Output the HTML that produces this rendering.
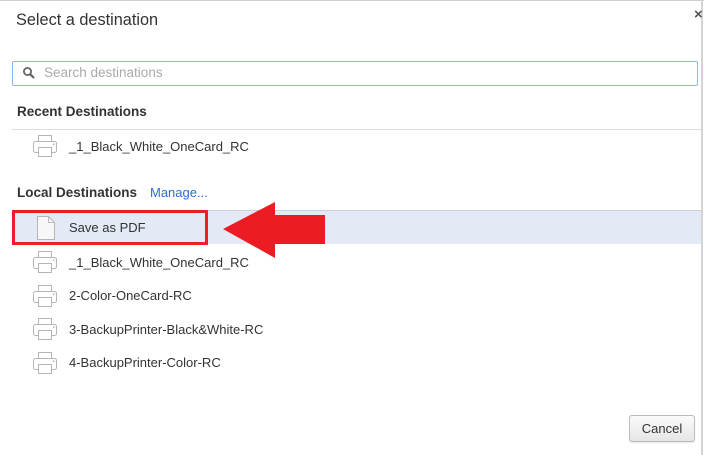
<!DOCTYPE html>
<html><head><meta charset="utf-8"><style>
body{margin:0;width:704px;height:455px;background:#fff;position:relative;overflow:hidden;font-family:"Liberation Sans",sans-serif;color:#333}
.a{position:absolute}
.t{font-size:13px;color:#333}
.h{font-size:13.5px;font-weight:bold;color:#333}
</style></head><body>
<div class="a" style="left:0;top:0;width:704px;height:1px;background:#cfcfcf"></div>
<div class="a" style="left:701px;top:0;width:2px;height:455px;background:#d4d4d4"></div>
<div class="a" style="left:16px;top:11px;font-size:16.3px;color:#333">Select a destination</div>
<div class="a" style="left:694px;top:6px;font-size:15px;font-weight:bold;color:#555">×</div>
<div class="a" style="left:12px;top:61px;width:686px;height:25px;border:1px solid #8fb3f0;border-radius:2px;box-sizing:border-box"></div>
<svg class="a" style="left:22px;top:66px" width="14" height="14" viewBox="0 0 14 14"><circle cx="5.5" cy="5.5" r="3.6" fill="none" stroke="#666" stroke-width="1.8"/><path d="M8.2 8.2L12 12" stroke="#666" stroke-width="2.2"/></svg>
<div class="a" style="left:44px;top:65px;font-size:13.5px;color:#aaa">Search destinations</div>
<div class="a h" style="left:17px;top:104px">Recent Destinations</div>
<div class="a" style="left:12px;top:129px;width:689px;height:1px;background:#ddd"></div>

<svg width="0" height="0" style="position:absolute"><defs><g id="pr"><rect x="5.5" y="0.5" width="13" height="7" fill="#fff" stroke="#b5b5b5"/><rect x="0.5" y="6.5" width="23" height="11" rx="2" fill="#fff" stroke="#b5b5b5"/><rect x="5.5" y="12.5" width="13" height="9" fill="#fff" stroke="#b5b5b5"/><rect x="20" y="8.5" width="1.5" height="1.5" fill="#b5b5b5"/></g></defs></svg>

<svg class="a" style="left:33px;top:135px" width="25" height="23"><use href="#pr"/></svg>
<div class="a t" style="left:69px;top:139px">_1_Black_White_OneCard_RC</div>

<div class="a h" style="left:17px;top:185px">Local Destinations</div>
<div class="a" style="left:150px;top:185px;font-size:13px;color:#2a6edb">Manage...</div>
<div class="a" style="left:12px;top:210px;width:689px;height:34px;background:#e3eaf6;border-top:1px solid #c9d0dc;box-sizing:border-box"></div>
<div class="a" style="left:12px;top:210px;width:196px;height:35px;border:3px solid #e8202a;box-sizing:border-box"></div>
<svg class="a" style="left:36px;top:215px" width="20" height="26"><path d="M1.5 1.5H12.5L18.5 7.5V24.5H1.5Z" fill="#f7f7f7" stroke="#b5b5b5"/><path d="M12.5 1.5V7.5H18.5" fill="none" stroke="#bbb"/></svg>
<div class="a t" style="left:69px;top:220px">Save as PDF</div>
<svg class="a" style="left:220px;top:200px" width="110" height="60"><path d="M3 29L55 2V15H105V44H55V58Z" fill="#ec1c24"/></svg>

<svg class="a" style="left:33px;top:251px" width="25" height="23"><use href="#pr"/></svg>
<div class="a t" style="left:69px;top:255px">_1_Black_White_OneCard_RC</div>
<svg class="a" style="left:33px;top:285px" width="25" height="23"><use href="#pr"/></svg>
<div class="a t" style="left:69px;top:288px">2-Color-OneCard-RC</div>
<svg class="a" style="left:33px;top:318px" width="25" height="23"><use href="#pr"/></svg>
<div class="a t" style="left:69px;top:322px">3-BackupPrinter-Black&amp;White-RC</div>
<svg class="a" style="left:33px;top:352px" width="25" height="23"><use href="#pr"/></svg>
<div class="a t" style="left:69px;top:355px">4-BackupPrinter-Color-RC</div>

<div class="a" style="left:629px;top:415px;width:66px;height:27px;box-sizing:border-box;border:1px solid #bbb;border-radius:3px;background:linear-gradient(#fafafa,#e6e6e6);box-shadow:0 1px 1px rgba(0,0,0,.1);font-size:13px;text-align:center;line-height:25px;color:#333">Cancel</div>
</body></html>
